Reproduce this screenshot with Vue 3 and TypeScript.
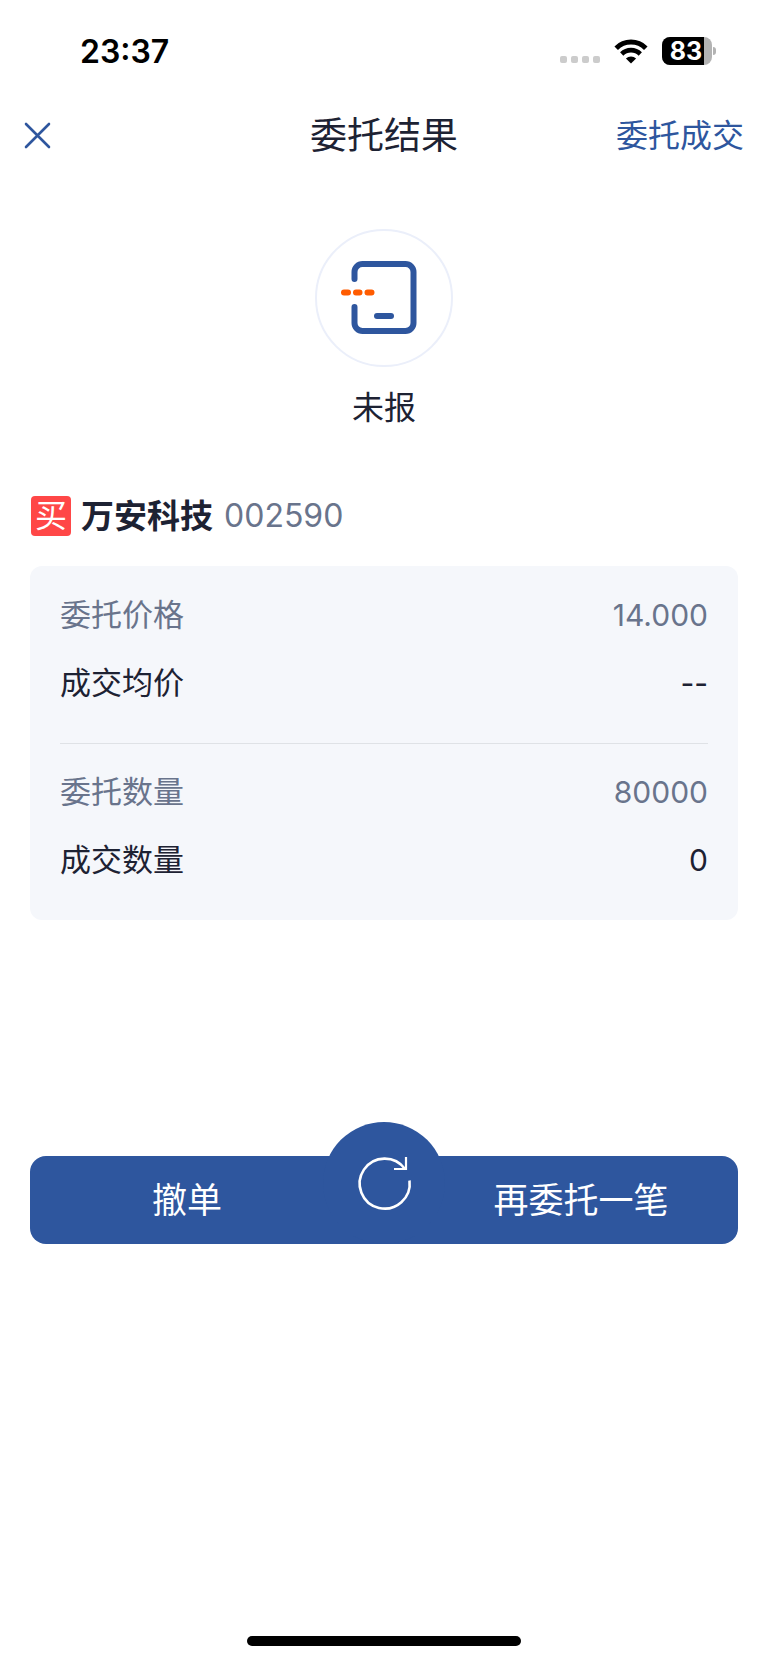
<script setup lang="ts">
interface Row {
  label: string
  value: string
  muted: boolean
}

const batteryLevel = 83

const groups: Row[][] = [
  [
    { label: '委托价格', value: '14.000', muted: true },
    { label: '成交均价', value: '--', muted: false },
  ],
  [
    { label: '委托数量', value: '80000', muted: true },
    { label: '成交数量', value: '0', muted: false },
  ],
]
</script>

<template>
  <div class="screen">
    <div class="status-bar">
      <time class="clock">23:37</time>
      <div class="indicators">
        <span class="signal"><i></i><i></i><i></i><i></i></span>
        <svg class="wifi" viewBox="0 0 34 25" aria-hidden="true">
          <path d="M2.2 9.2 A21 21 0 0 1 31.8 9.2" fill="none" stroke="#000" stroke-width="5" />
          <path d="M7.7 15 A13.2 13.2 0 0 1 26.3 15" fill="none" stroke="#000" stroke-width="4.6" />
          <path d="M17 24.6 L11.9 19.6 A7.3 7.3 0 0 1 22.1 19.6 Z" fill="#000" />
        </svg>
        <span class="battery">
          <span class="battery-body">
            <span class="battery-fill" :style="{ width: batteryLevel + '%' }"></span>
            <span class="battery-text">{{ batteryLevel }}</span>
          </span>
          <span class="battery-cap"></span>
        </span>
      </div>
    </div>

    <header class="nav">
      <button class="close" type="button" aria-label="关闭">
        <svg viewBox="0 0 28 28" aria-hidden="true">
          <path d="M2 2 L25 25 M25 2 L2 25" stroke="#2e569e" stroke-width="2.6" stroke-linecap="round" />
        </svg>
      </button>
      <h1>委托结果</h1>
      <a class="deals" href="#">委托成交</a>
    </header>

    <main>
      <section class="state">
        <div class="state-icon">
          <svg viewBox="0 0 134 134" fill="none" stroke-width="6" stroke-linecap="round" aria-hidden="true">
            <path
              d="M37.5 48 V41 A8 8 0 0 1 45.5 33 H88.5 A8 8 0 0 1 96.5 41 V92 A8 8 0 0 1 88.5 100 H45.5 A8 8 0 0 1 37.5 92 V76"
              stroke="#2e569e"
            />
            <path d="M60 85 H74" stroke="#2e569e" />
            <path d="M27 61.5 H31 M39 61.5 H42.5 M50.5 61.5 H54.5" stroke="#ff5c00" />
          </svg>
        </div>
        <p>未报</p>
      </section>

      <div class="stock">
        <span class="badge">买</span>
        <h2>万安科技</h2>
        <span class="code">002590</span>
      </div>

      <div class="card">
        <dl v-for="(rows, index) in groups" :key="index" class="group">
          <div v-for="row in rows" :key="row.label" class="row" :class="{ muted: row.muted }">
            <dt>{{ row.label }}</dt>
            <dd>{{ row.value }}</dd>
          </div>
        </dl>
      </div>

      <div class="actions">
        <button class="action" type="button">撤单</button>
        <button class="refresh" type="button" aria-label="刷新">
          <svg viewBox="0 0 60 60" fill="none" stroke="#fff" stroke-width="2.6" aria-hidden="true">
            <path d="M55.5 27.5 A25 25 0 1 1 51 16" />
            <path d="M52 4 V16 H40" stroke-width="2.2" />
          </svg>
        </button>
        <button class="action" type="button">再委托一笔</button>
      </div>
    </main>

    <div class="home-indicator"></div>
  </div>
</template>

<style>
body {
  margin: 0;
  background: #fff;
}
</style>

<style scoped>
.screen {
  display: flex;
  flex-direction: column;
  min-height: 100vh;
  background: #fff;
  color: #1d2233;
  font-family: Inter, 'Noto Sans CJK SC', sans-serif;
}

h1,
h2,
p,
dl,
dd {
  margin: 0;
  font-weight: 400;
}

button {
  padding: 0;
  border: 0;
  background: none;
  color: inherit;
  font-family: inherit;
  cursor: pointer;
}

svg {
  display: block;
}

.status-bar {
  display: flex;
  align-items: center;
  justify-content: space-between;
  height: 102px;
  padding: 0 52px 0 80px;
  color: #000;
}

.clock {
  font-size: 32px;
  font-weight: 600;
}

.indicators {
  display: flex;
  align-items: center;
}

.signal {
  display: flex;
  gap: 4px;
  margin: 17px 14px 0 0;
}

.signal i {
  width: 7px;
  height: 7px;
  border-radius: 2px;
  background: #ccc;
}

.wifi {
  width: 34px;
  height: 25px;
  margin-right: 14px;
}

.battery {
  display: flex;
  align-items: center;
  gap: 1px;
}

.battery-body {
  position: relative;
  width: 50px;
  height: 28px;
  border-radius: 8px;
  overflow: hidden;
  background: #b3b3b3;
}

.battery-fill {
  display: block;
  height: 100%;
  background: #000;
}

.battery-text {
  position: absolute;
  inset: 0;
  padding-right: 2px;
  color: #fff;
  font-size: 25px;
  font-weight: 700;
  line-height: 28px;
  text-align: center;
}

.battery-cap {
  width: 3px;
  height: 8px;
  border-radius: 0 4px 4px 0;
  background: #b3b3b3;
}

.nav {
  display: grid;
  grid-template-columns: 1fr auto 1fr;
  align-items: center;
  height: 68px;
  padding: 0 24px;
}

.close {
  width: 28px;
  height: 28px;
}

.nav h1 {
  font-size: 37px;
  line-height: 48px;
}

.deals {
  justify-self: end;
  color: #2e569e;
  font-size: 32px;
  line-height: 48px;
  text-decoration: none;
}

main {
  flex: 1;
  padding: 0 30px;
}

.state {
  display: flex;
  flex-direction: column;
  align-items: center;
  padding-top: 59px;
}

.state-icon {
  box-sizing: border-box;
  width: 138px;
  height: 138px;
  border: 2px solid #ebeffa;
  border-radius: 50%;
}

.state-icon svg {
  width: 100%;
}

.state p {
  margin-top: 17px;
  font-size: 32px;
  line-height: 48px;
}

.stock {
  display: flex;
  align-items: center;
  height: 48px;
  margin-top: 60px;
}

.badge {
  width: 40px;
  height: 40px;
  margin: 0 10px 0 1px;
  border-radius: 4px;
  background: #ff4747;
  color: #fff;
  font-size: 32px;
  line-height: 40px;
  text-align: center;
}

.stock h2 {
  font-size: 33px;
  font-weight: 600;
  line-height: 48px;
}

.code {
  margin-left: 11px;
  color: #69748c;
  font-size: 32px;
  line-height: 48px;
}

.card {
  margin-top: 26px;
  padding: 0 30px;
  border-radius: 12px;
  background: #f5f7fb;
}

.group {
  padding: 15px 0 26px;
}

.group + .group {
  padding-top: 14px;
  border-top: 1px solid #dfe2e6;
}

.row {
  display: flex;
  justify-content: space-between;
  font-size: 31px;
  line-height: 68px;
}

.row.muted {
  color: #69748c;
}

.row dd {
  font-size: 30px;
}

.actions {
  display: flex;
  align-items: flex-end;
  height: 88px;
  margin-top: 236px;
  border-radius: 16px;
  background: #2e569e;
  color: #fff;
}

.action {
  flex: 1 1 0;
  height: 88px;
  font-size: 35px;
  line-height: 88px;
}

.refresh {
  flex: none;
  display: flex;
  align-items: center;
  justify-content: center;
  width: 122px;
  height: 122px;
  margin: 0 -21px;
  border-radius: 50%;
  background: #2e569e;
}

.refresh svg {
  width: 60px;
  height: 60px;
}

.home-indicator {
  width: 274px;
  height: 10px;
  margin: 0 auto 17px;
  border-radius: 5px;
  background: #000;
}
</style>
